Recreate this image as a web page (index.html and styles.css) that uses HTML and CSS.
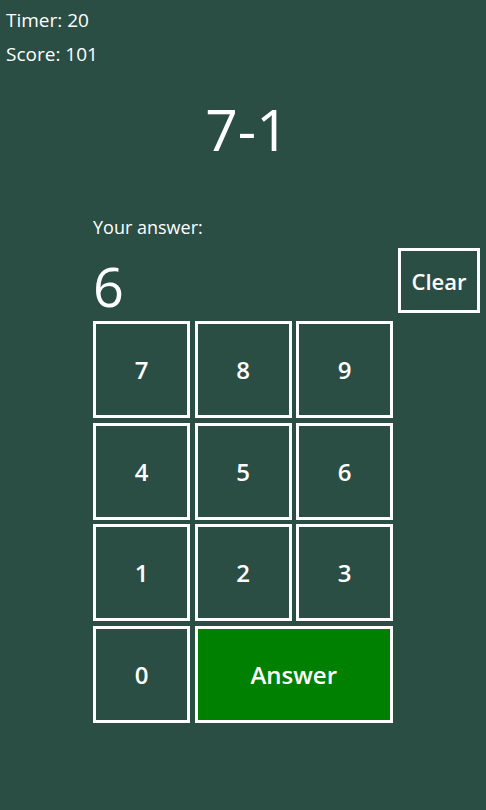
FILE: index.html
```html
<!DOCTYPE html>
<html lang="en">
<head>
    <meta charset="UTF-8">
    <meta name="viewport" content="width=device-width, initial-scale=1.0">
    <title>Math Quiz</title>
    <link rel="stylesheet" href="styles.css">
</head>
<body>
    <header class="stats">
        <p>Timer: <span id="timer">20</span></p>
        <p>Score: <span id="score">101</span></p>
    </header>
    <main>
        <h1 class="question">7-1</h1>
        <div class="panel">
            <p class="label">Your answer:</p>
            <div class="answer-row">
                <span class="answer-value">6</span>
                <button class="clear-btn">Clear</button>
            </div>
            <div class="keypad">
                <button class="key">7</button>
                <button class="key">8</button>
                <button class="key">9</button>
                <button class="key">4</button>
                <button class="key">5</button>
                <button class="key">6</button>
                <button class="key">1</button>
                <button class="key">2</button>
                <button class="key">3</button>
                <button class="key">0</button>
                <button class="key submit">Answer</button>
            </div>
        </div>
    </main>
</body>
</html>
```

FILE: styles.css
```css
/* General Styles */
body {
    font-family: "Open Sans", "Noto Sans", sans-serif;
    margin: 0;
    padding: 0;
    background-color: #2b4e44;
    color: #fff;
    min-height: 810px;
}

.stats {
    padding: 3px 6px 0;
}

.stats p {
    margin: 0;
    font-size: 19px;
    line-height: 34px;
}

.question {
    margin: 18px 0 0;
    padding-left: 8px;
    text-align: center;
    font-size: 57px;
    font-weight: 400;
    line-height: 80px;
}

.panel {
    margin-left: 93px;
    width: 387px;
}

.label {
    margin: 46px 0 0;
    font-size: 18px;
    line-height: 24px;
}

.answer-row {
    display: flex;
    justify-content: space-between;
    align-items: flex-end;
    height: 65px;
    margin: 9px 0 8px;
}

.answer-value {
    font-size: 54px;
    line-height: 60px;
    margin-bottom: -3px;
}

.clear-btn {
    width: 82px;
    height: 65px;
    border: 3px solid #fff;
    background: transparent;
    color: #fff;
    font-family: inherit;
    font-size: 22px;
    font-weight: 600;
    padding: 0;
}

.keypad {
    display: grid;
    grid-template-columns: repeat(3, 97px);
    grid-auto-rows: 97px;
    gap: 4.5px;
}

.key {
    border: 3px solid #fff;
    background: transparent;
    color: #fff;
    font-family: inherit;
    font-size: 24px;
    font-weight: 600;
    padding: 0;
}

.key.submit {
    grid-column: span 2;
    background-color: #008000;
}
```
